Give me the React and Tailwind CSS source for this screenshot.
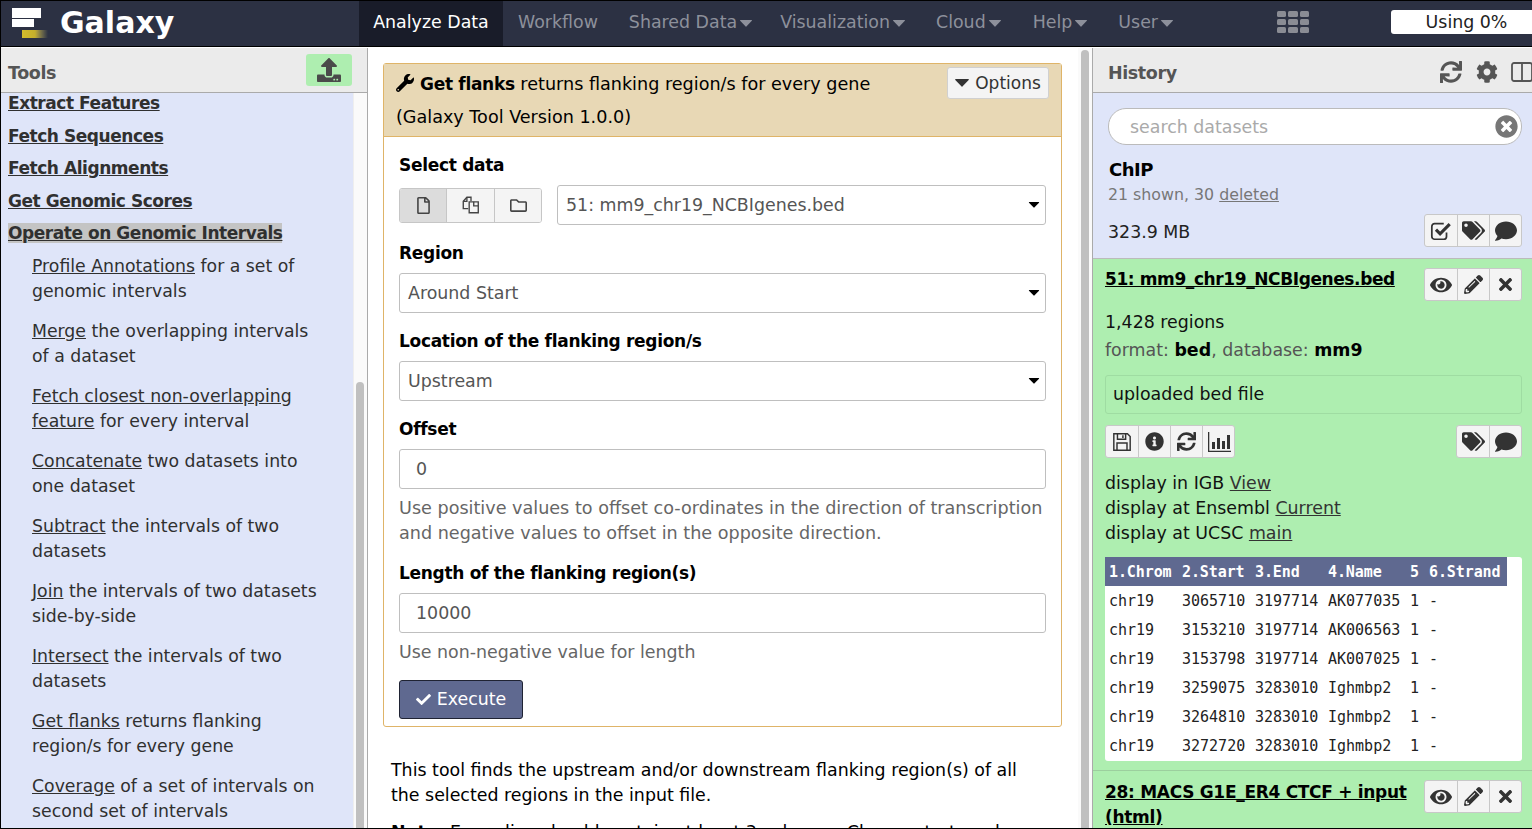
import React from "react";
import { FaWrench, FaSync, FaCog, FaTimes, FaEye, FaPencilAlt, FaTags, FaComment, FaInfoCircle, FaRegFile, FaRegFolder, FaTimesCircle, FaCheck, FaUpload } from "react-icons/fa";

const font = { fontFamily: '"DejaVu Sans", sans-serif' };
const mono = { fontFamily: '"DejaVu Sans Mono", monospace' };

function Caret({ className = "" }) {
  return (
    <svg viewBox="0 0 12 7" className={className} fill="currentColor">
      <path d="M0.5 0h11a.5.5 0 0 1 .35.85l-5.5 5.7a.5.5 0 0 1-.7 0L.15.85A.5.5 0 0 1 .5 0z" />
    </svg>
  );
}

function ColumnsIcon({ className = "" }) {
  return (
    <svg viewBox="0 0 22 20" className={className} fill="none" stroke="currentColor" strokeWidth="1.8">
      <rect x="1" y="1" width="20" height="18" rx="2" />
      <path d="M11 1v18" />
    </svg>
  );
}

function CheckSquareO({ style }) {
  return (
    <svg viewBox="0 0 24 24" style={style} fill="none" stroke="currentColor">
      <path d="M18 13.5v4.5a3 3 0 0 1-3 3H5a3 3 0 0 1-3-3V7a3 3 0 0 1 3-3h10" strokeWidth="1.9" />
      <path d="M6.5 10.5l4.5 4.5L21.5 4.5" strokeWidth="3.4" />
    </svg>
  );
}

function FilesO({ className = "" }) {
  return (
    <svg viewBox="0 0 22 22" className={className} fill="none" stroke="currentColor" strokeWidth="1.5">
      <path d="M8 15H2.5V7l4-4.5H11v4" />
      <path d="M6.5 2.5V7H2.5" />
      <path d="M9 7.5h5l5 0V19.5H9z" />
      <path d="M14 7.5V12h5" />
    </svg>
  );
}

function FloppyO({ style }) {
  return (
    <svg viewBox="0 0 22 22" style={style} fill="none" stroke="currentColor" strokeWidth="1.6">
      <path d="M2 2h15l3 3v15H2z" />
      <path d="M6 2v6h9V2" />
      <path d="M5.5 20v-8h11v8" />
      <path d="M12 3.5v3" />
    </svg>
  );
}

function BarChartO({ style }) {
  return (
    <svg viewBox="0 0 24 22" style={style} fill="currentColor">
      <path d="M1 1h1.3v18.7H24V21H1z" />
      <rect x="5" y="11" width="3" height="7" />
      <rect x="10" y="7" width="3" height="11" />
      <rect x="15" y="10" width="3" height="8" />
      <rect x="20" y="4" width="3" height="14" />
    </svg>
  );
}

function NavItem({ label, caret, className = "" }) {
  return (
    <div className={`flex items-center pb-[3px] text-[17.4px] text-[#8d909b] ${className}`}>
      {label}
      {caret && <Caret className="ml-[3px] mt-[3px] h-[7px] w-[12px]" />}
    </div>
  );
}

function Masthead() {
  return (
    <div className="flex h-[45px] shrink-0 items-stretch bg-[#2c3143]">
      <div className="flex w-[358px] items-center pb-[2px] pl-[11px]">
        <div className="h-[30px] w-[41px]">
          <div className="h-[10px] w-[29px] bg-white" />
          <div className="mt-[1px] h-[8px] w-[22px] bg-white" />
          <div className="ml-[10px] mt-[3px] h-[8px] w-[26px] bg-gradient-to-r from-[#d4bd2c] via-[#c4ae2c] to-[#2c3143]" />
        </div>
        <div className="ml-[7px] text-[30px] font-bold leading-none text-white">Galaxy</div>
      </div>
      <div className="flex w-[144px] items-center justify-center bg-[#191c29] pb-[3px] text-[17.4px] text-white">Analyze Data</div>
      <NavItem label="Workflow" className="ml-[15px]" />
      <NavItem label="Shared Data" caret className="ml-[31px]" />
      <NavItem label="Visualization" caret className="ml-[28px]" />
      <NavItem label="Cloud" caret className="ml-[31px]" />
      <NavItem label="Help" caret className="ml-[32px]" />
      <NavItem label="User" caret className="ml-[31px]" />
      <div className="ml-[104px] flex items-center pb-[3px]">
        <div className="grid grid-cols-3 gap-[2px]">
          {Array.from({ length: 9 }).map((_, i) => (
            <div key={i} className="h-[6px] w-[9.5px] rounded-[1.5px] bg-[#8a8c94]" />
          ))}
        </div>
      </div>
      <div className="ml-auto flex items-center pb-[3px]">
        <div className="flex h-[24px] w-[141px] items-center justify-center rounded-l-[3px] bg-white pl-[10px] text-[17.4px] text-[#222]">Using 0%</div>
      </div>
    </div>
  );
}

function PanelHeader({ title, children, className = "" }) {
  return (
    <div className={`flex h-[45px] shrink-0 items-center justify-between border-b border-[#aaa] bg-[#ebebeb] pt-[6px] ${className}`}>
      <span className="text-[17.5px] font-bold tracking-[-0.4px] text-[#555]">{title}</span>
      {children}
    </div>
  );
}

function ToolLink({ first, rest, rest2 }) {
  return (
    <div className="mb-[15px] pl-[31px] pr-[4px] text-[17.3px] leading-[25px] text-[#303030]">
      <span className="underline">{first}</span> {rest}
      {rest2 && <div>{rest2}</div>}
    </div>
  );
}

function Section({ label, active }) {
  return (
    <div className="h-[32.5px] pl-[7px] text-[17px] font-bold leading-[32.5px] tracking-[-0.45px] text-[#303030]">
      <span className={active ? "bg-[#c4c4c4] underline" : "underline"}>{label}</span>
    </div>
  );
}

function ToolsPanel() {
  return (
    <div className="flex w-[367px] shrink-0 flex-col border-r border-[#aaa]">
      <PanelHeader title="Tools" className="pl-[7px]">
        <div className="mr-[15px] flex h-[32px] w-[46px] -translate-y-[3px] items-center justify-center rounded-[3px] bg-[#aeeeb0] text-[#4a4a4a]">
          <FaUpload className="text-[24px]" />
        </div>
      </PanelHeader>
      <div className="flex min-h-0 flex-1">
        <div className="min-h-0 flex-1 overflow-hidden bg-[#dfe5f9]">
          <div className="-mt-[6px]">
            <Section label="Extract Features" />
            <Section label="Fetch Sequences" />
            <Section label="Fetch Alignments" />
            <Section label="Get Genomic Scores" />
            <Section label="Operate on Genomic Intervals" active />
            <div className="pt-[4px]">
              <ToolLink first="Profile Annotations" rest="for a set of" rest2="genomic intervals" />
              <ToolLink first="Merge" rest="the overlapping intervals" rest2="of a dataset" />
              <ToolLink first="Fetch closest non-overlapping" rest2={<span><span className="underline">feature</span> for every interval</span>} />
              <ToolLink first="Concatenate" rest="two datasets into" rest2="one dataset" />
              <ToolLink first="Subtract" rest="the intervals of two" rest2="datasets" />
              <ToolLink first="Join" rest="the intervals of two datasets" rest2="side-by-side" />
              <ToolLink first="Intersect" rest="the intervals of two" rest2="datasets" />
              <ToolLink first="Get flanks" rest="returns flanking" rest2="region/s for every gene" />
              <ToolLink first="Coverage" rest="of a set of intervals on" rest2="second set of intervals" />
            </div>
          </div>
        </div>
        <div className="w-[14px] shrink-0 border-l border-[#eee] bg-[#fafafa] pl-[2px] pt-[289px]">
          <div className="h-full w-[8px] rounded-t-[4px] bg-[#c0c0c0]" />
        </div>
      </div>
    </div>
  );
}

function Label({ children }) {
  return <div className="mb-[7px] text-[17px] font-bold leading-[25px] tracking-[-0.3px] text-black">{children}</div>;
}

function SelectBox({ value, className = "" }) {
  return (
    <div className={`flex h-[40px] items-center justify-between rounded-[3px] border border-[#bfbfbf] bg-white pl-[8px] pr-[5px] text-[17.4px] text-[#555] ${className}`}>
      <span>{value}</span>
      <Caret className="h-[6px] w-[12px] text-black" />
    </div>
  );
}

function InputBox({ value }) {
  return (
    <div className="flex h-[40px] items-center rounded-[3px] border border-[#bfbfbf] bg-white pl-[16px] text-[17.4px] text-[#555]">{value}</div>
  );
}

function ToolForm() {
  return (
    <div className="min-w-0 flex-1 overflow-hidden">
      <div className="pl-[15px] pr-[16px] pt-[15px]">
        <div className="rounded-[3px] border border-[#dfb468]">
          <div className="relative h-[73px] border-b border-[#dfb468] bg-[#e8d8b5] px-[12px] text-[17.6px] leading-[33px] text-black">
            <div className="pt-[4px]">
              <FaWrench className="mr-[6px] inline-block -translate-y-[2px] text-[18px]" />
              <b className="text-[17px] tracking-[-0.3px]">Get flanks</b> returns flanking region/s for every gene
            </div>
            <div>(Galaxy Tool Version 1.0.0)</div>
            <div className="absolute right-[12px] top-[3px] flex h-[32px] w-[102px] items-center justify-center rounded-[3px] border border-[#d0d0d0] bg-[#f4f4f4] text-[17px] text-[#333]">
              <Caret className="mr-[6px] h-[8px] w-[14px]" />
              Options
            </div>
          </div>
          <div className="px-[15px] pb-[7px] pt-[16px]">
            <Label>Select data</Label>
            <div className="mb-[16px] flex items-center">
              <div className="flex h-[35px] w-[143px] overflow-hidden rounded-[3px] border border-[#c6c6c6] text-[#444]">
                <div className="flex w-[47px] items-center justify-center border-r border-[#c6c6c6] bg-[#dcdcdc]"><FaRegFile className="text-[17px]" /></div>
                <div className="flex w-[48px] items-center justify-center border-r border-[#c6c6c6] bg-[#f4f4f4]"><FilesO className="h-[20px] w-[20px]" /></div>
                <div className="flex flex-1 items-center justify-center bg-[#f4f4f4]"><FaRegFolder className="text-[17px]" /></div>
              </div>
              <SelectBox value="51: mm9_chr19_NCBIgenes.bed" className="ml-[15px] flex-1" />
            </div>
            <Label>Region</Label>
            <SelectBox value="Around Start" className="mb-[16px]" />
            <Label>Location of the flanking region/s</Label>
            <SelectBox value="Upstream" className="mb-[16px]" />
            <Label>Offset</Label>
            <InputBox value="0" />
            <div className="mb-[15px] mt-[7px] text-[17.6px] leading-[25px] text-[#666]">
              Use positive values to offset co-ordinates in the direction of transcription and negative values to offset in the opposite direction.
            </div>
            <Label>Length of the flanking region(s)</Label>
            <InputBox value="10000" />
            <div className="mt-[7px] text-[17.4px] leading-[25px] text-[#666]">Use non-negative value for length</div>
            <div className="mt-[15px] flex h-[39px] w-[124px] items-center justify-center rounded-[3px] border border-[#1f2333] bg-[#5f6990] text-[17.4px] text-white">
              <FaCheck className="mr-[6px] text-[15px]" />
              Execute
            </div>
          </div>
        </div>
        <div className="pl-[8px] pr-[30px] pt-[31px] text-[17.4px] leading-[25px] text-black">
          <p>This tool finds the upstream and/or downstream flanking region(s) of all the selected regions in the input file.</p>
          <p className="mt-[12px]"><b>Note:</b> Every line should contain at least 3 columns: Chrom, start, and end</p>
        </div>
      </div>
    </div>
  );
}

function BtnGroup({ icons, className = "" }) {
  return (
    <div className={`flex h-[33px] overflow-hidden rounded-[3px] border border-[#c8c8c8] bg-[#f4f4f4] text-[#333] ${className}`}>
      {icons.map(([I, size], i) => (
        <div key={i} className={`flex w-[32px] items-center justify-center ${i ? "border-l border-[#c8c8c8]" : ""}`}>
          <I style={{ width: size, height: size }} />
        </div>
      ))}
    </div>
  );
}

const rows = [
  ["chr19", "3065710", "3197714", "AK077035"],
  ["chr19", "3153210", "3197714", "AK006563"],
  ["chr19", "3153798", "3197714", "AK007025"],
  ["chr19", "3259075", "3283010", "Ighmbp2"],
  ["chr19", "3264810", "3283010", "Ighmbp2"],
  ["chr19", "3272720", "3283010", "Ighmbp2"],
];

const colW = ["w-[73px]", "w-[73px]", "w-[73px]", "w-[82px]", "w-[19px]", "w-[78px]"];

function PeekTable() {
  return (
    <div style={mono} className="mt-[11px] rounded-[3px] bg-white pb-[1px] text-[15px]">
      <div className="flex h-[29px] w-[402px] items-center bg-[#5f6990] pl-[4px] pt-[1px] font-bold text-white">
        {["1.Chrom", "2.Start", "3.End", "4.Name", "5", "6.Strand"].map((h, i) => (
          <div key={h} className={`whitespace-nowrap tracking-[-0.1px] ${colW[i]}`}>{h}</div>
        ))}
      </div>
      {rows.map((r) => (
        <div key={r[1]} className="flex h-[29px] items-center pl-[4px] pt-[1px] text-[#222]">
          {[...r, "1", "-"].map((c, i) => (
            <div key={i} className={`whitespace-nowrap ${colW[i]}`}>{c}</div>
          ))}
        </div>
      ))}
    </div>
  );
}

function HistoryPanel() {
  const itemBtns = [[FaEye, 22], [FaPencilAlt, 19], [FaTimes, 19]];
  return (
    <div className="flex w-[440px] shrink-0 flex-col overflow-hidden border-l border-[#aaa]">
      <PanelHeader title="History" className="pl-[15px]">
        <div className="-mr-[1px] flex -translate-y-[1px] items-center text-[#555]">
          <FaSync className="text-[22px]" />
          <FaCog className="ml-[14px] text-[22px]" />
          <ColumnsIcon className="ml-[13px] h-[20px] w-[22px]" />
        </div>
      </PanelHeader>
      <div className="min-h-0 flex-1 overflow-hidden">
        <div className="h-[166px] border-b border-[#bbb] bg-[#dfe5f9] pl-[15px] pr-[10px] pt-[15px]">
          <div className="flex h-[37px] items-center justify-between rounded-[18px] border border-[#bbb] bg-white pl-[21px] pr-[3px] text-[17.4px] text-[#aaa]">
            <span className="pt-[1px]">search datasets</span>
            <FaTimesCircle className="text-[23px] text-[#777]" />
          </div>
          <div className="ml-[1px] mt-[11px] text-[18px] font-bold leading-[27px] tracking-[-0.5px] text-black">ChIP</div>
          <div className="text-[15.8px] leading-[23px] text-[#777]">21 shown, 30 <span className="underline">deleted</span></div>
          <div className="mt-[8px] flex items-center justify-between">
            <span className="pt-[3px] text-[17.4px] text-[#222]">323.9 MB</span>
            <BtnGroup icons={[[CheckSquareO, 22], [FaTags, 23], [FaComment, 22]]} />
          </div>
        </div>
        <div className="border-b border-[#9ccf9e] bg-[#aeeeb0] pb-[9px] pl-[12px] pr-[10px] pt-[9px]">
          <div className="flex items-start justify-between">
            <div className="text-[17px] font-bold leading-[22px] tracking-[-0.4px] text-black underline">51: mm9_chr19_NCBIgenes.bed</div>
            <BtnGroup icons={itemBtns} />
          </div>
          <div className="mt-[7px] text-[17.4px] leading-[28px] text-[#111]">1,428 regions</div>
          <div className="text-[17.4px] leading-[28px] text-[#555]">format: <b className="text-black">bed</b>, database: <b className="text-black">mm9</b></div>
          <div className="mt-[11px] flex h-[39px] items-center rounded-[3px] border border-[#9fdca2] pl-[7px] text-[17.4px] text-[#111]">uploaded bed file</div>
          <div className="mt-[11px] flex justify-between">
            <BtnGroup icons={[[FloppyO, 20], [FaInfoCircle, 19], [FaSync, 19], [BarChartO, 24]]} />
            <BtnGroup icons={[[FaTags, 23], [FaComment, 22]]} />
          </div>
          <div className="mt-[13px] text-[17.4px] leading-[25px] text-[#111]">
            <div>display in IGB <span className="text-[#333] underline">View</span></div>
            <div>display at Ensembl <span className="text-[#333] underline">Current</span></div>
            <div>display at UCSC <span className="text-[#333] underline">main</span></div>
          </div>
          <PeekTable />
        </div>
        <div className="bg-[#aeeeb0] pb-[20px] pl-[12px] pr-[10px] pt-[9px]">
          <div className="flex items-start justify-between">
            <div className="w-[310px] text-[17px] font-bold leading-[25px] tracking-[-0.3px] text-black underline">28: MACS G1E_ER4 CTCF + input (html)</div>
            <BtnGroup icons={itemBtns} />
          </div>
        </div>
      </div>
    </div>
  );
}

export default function App() {
  return (
    <div style={font} className="flex h-[829px] w-[1532px] flex-col overflow-hidden border-b border-l border-t border-black bg-white">
      <Masthead />
      <div className="h-[2px] shrink-0 border-t border-black bg-white" />
      <div className="flex min-h-0 flex-1">
        <ToolsPanel />
        <ToolForm />
        <div className="w-[14px] shrink-0 bg-[#fafafa] pl-[3px] pt-[2px]">
          <div className="h-full w-[8px] rounded-t-[4px] bg-[#c0c0c0]" />
        </div>
        <HistoryPanel />
      </div>
    </div>
  );
}
